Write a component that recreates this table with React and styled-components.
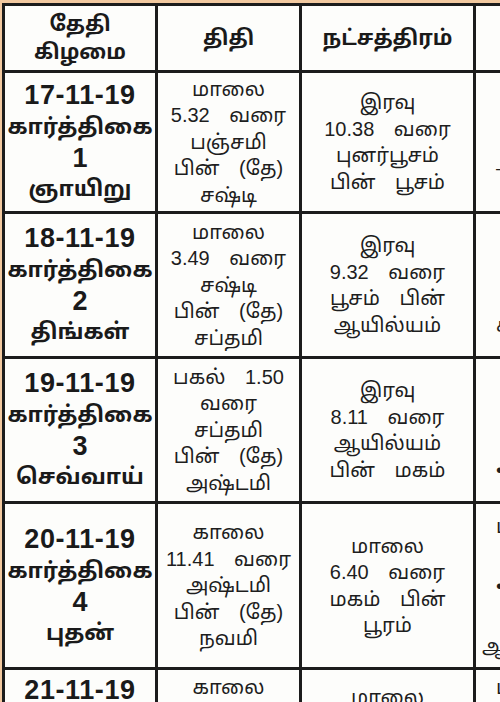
import React from "react";
import styled, { createGlobalStyle } from "styled-components";

const Global = createGlobalStyle`
  html, body { margin: 0; padding: 0; }
  body {
    background: #f2c9a0;
    width: 500px;
    height: 702px;
    overflow: hidden;
    font-family: "Liberation Sans", "Noto Sans Tamil", "Lohit Tamil", "Noto Sans", sans-serif;
    color: #1a1a1a;
  }
`;

const Page = styled.div`
  padding: 3px 0 0 2px;
  width: 700px;
`;

const Grid = styled.div`
  display: grid;
  grid-template-columns: 150px 141px 171px 200px;
  grid-template-rows: 64px 138px 142px 142px 163px 120px;
  gap: 3px;
  padding: 3px 0 0 3px;
  background: #1c1c1c;
  width: max-content;
`;

const Cell = styled.div`
  background: #fdfdfb;
  display: flex;
  flex-direction: column;
  justify-content: ${(p) => (p.$top ? "flex-start" : "center")};
  padding-top: ${(p) => p.$top || 0}px;
  align-items: ${(p) => (p.$side ? "flex-start" : "center")};
  padding-left: ${(p) => (p.$side ? 20 : 0)}px;
  text-align: center;
  overflow: hidden;
`;

const HeadLine = styled.div`
  font-size: 21px;
  font-weight: 700;
  line-height: 28px;
  color: #1a1a1a;
  white-space: nowrap;
`;

const DateLine = styled.div`
  font-family: "Liberation Sans", sans-serif;
  font-size: 27px;
  font-weight: 700;
  letter-spacing: 0.6px;
  line-height: 32px;
  color: #1a1a1a;
`;

const DayLine = styled.div`
  font-weight: 700;
  line-height: ${(p) => (p.$num ? "30px" : "32px")};
  font-family: ${(p) =>
    p.$num ? '"Liberation Sans", sans-serif' : "inherit"};
  font-size: ${(p) => (p.$num ? "27px" : "22px")};
`;

const TextLine = styled.div`
  font-size: 20px;
  line-height: ${(p) => p.$lh || 26.5}px;
  word-spacing: ${(p) => (p.$wide ? "14px" : "6px")};
  margin-left: ${(p) => p.$shift || 0}px;
  white-space: nowrap;
  color: #1e1e1e;
`;

const rows = [
  {
    date: "17-11-19",
    day: "1",
    wd: "ஞாயிறு",
    thithi: ["மாலை", "5.32 வரை", "பஞ்சமி", "பின் (தே)", "சஷ்டி"],
    star: ["இரவு", "10.38 வரை", "புனர்பூசம்", "பின் பூசம்"],
    extra: ["", "", "", "– சித்த யோகம்", ""],
  },
  {
    date: "18-11-19",
    day: "2",
    wd: "திங்கள்",
    thithi: ["மாலை", "3.49 வரை", "சஷ்டி", "பின் (தே)", "சப்தமி"],
    star: ["இரவு", "9.32 வரை", "பூசம் பின்", "ஆயில்யம்"],
    extra: ["", "", "", "சித்த யோகம்"],
  },
  {
    date: "19-11-19",
    day: "3",
    wd: "செவ்வாய்",
    thithi: ["பகல் 1.50", "வரை", "சப்தமி", "பின் (தே)", "அஷ்டமி"],
    star: ["இரவு", "8.11 வரை", "ஆயில்யம்", "பின் மகம்"],
    extra: ["", "", "", "• யோகம்"],
  },
  {
    date: "20-11-19",
    day: "4",
    wd: "புதன்",
    thithi: ["காலை", "11.41 வரை", "அஷ்டமி", "பின் (தே)", "நவமி"],
    star: ["மாலை", "6.40 வரை", "மகம் பின்", "பூரம்"],
    extra: ["மாலை", "", "• யோகம்", "", "ஆயில்யம் பின்"],
    extraLh: 30,
    shift: [0, 0, 0, 0, -14],
  },
  {
    date: "21-11-19",
    day: "5",
    wd: "வியாழன்",
    thithi: ["காலை", "11.10 வரை"],
    star: ["மாலை", "5.20 வரை"],
    extra: ["மாலை"],
  },
];

export default function App() {
  return (
    <>
      <Global />
      <Page>
        <Grid>
          <Cell>
            <HeadLine>தேதி</HeadLine>
            <HeadLine>கிழமை</HeadLine>
          </Cell>
          <Cell>
            <HeadLine>திதி</HeadLine>
          </Cell>
          <Cell>
            <HeadLine>நட்சத்திரம்</HeadLine>
          </Cell>
          <Cell $side>
            <HeadLine style={{ marginLeft: 40 }}>யோகம்</HeadLine>
          </Cell>
          {rows.map((r, i) => {
            const last = i === rows.length - 1;
            return (
              <React.Fragment key={r.date}>
                <Cell $top={last ? 4 : 0}>
                  <DateLine>{r.date}</DateLine>
                  <DayLine>கார்த்திகை</DayLine>
                  <DayLine $num>{r.day}</DayLine>
                  <DayLine>{r.wd}</DayLine>
                </Cell>
                <Cell $top={last ? 4 : 0}>
                  {r.thithi.map((t, k) => (
                    <TextLine key={k} $wide={t.includes(" ")}>
                      {t}
                    </TextLine>
                  ))}
                </Cell>
                <Cell $top={last ? 14 : 0}>
                  {r.star.map((t, k) => (
                    <TextLine key={k} $wide={t.includes(" ")}>
                      {t}
                    </TextLine>
                  ))}
                </Cell>
                <Cell $side $top={last ? 4 : 0}>
                  {r.extra.map((t, k) => (
                    <TextLine
                      key={k}
                      $lh={r.extraLh}
                      $shift={r.shift ? r.shift[k] : 0}
                    >
                      {t || "\u00a0"}
                    </TextLine>
                  ))}
                </Cell>
              </React.Fragment>
            );
          })}
        </Grid>
      </Page>
    </>
  );
}
